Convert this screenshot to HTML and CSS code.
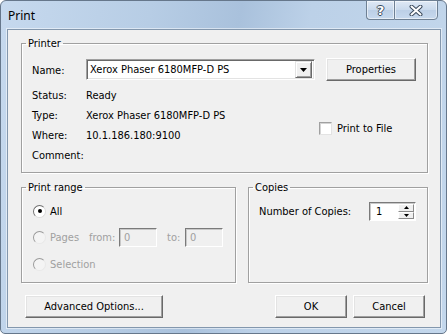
FILE: index.html
```html
<!DOCTYPE html>
<html lang="en">
<head>
  <meta charset="UTF-8">
  <title>Print</title>
  <link rel="stylesheet" href="styles.css">
</head>
<body>
  <div class="window">
    <div class="titlebar">
      <span class="title">Print</span>
      <div class="caption-buttons">
        <button class="cap help">?</button>
        <button class="cap close">
          <svg width="14" height="11" viewBox="0 0 14 11">
            <path d="M2.5 1.5 L11.5 9.5 M11.5 1.5 L2.5 9.5" stroke="#3b4a5c" stroke-width="4" stroke-linecap="round"/>
            <path d="M2.5 1.5 L11.5 9.5 M11.5 1.5 L2.5 9.5" stroke="#fff" stroke-width="2" stroke-linecap="round"/>
          </svg>
        </button>
      </div>
    </div>

    <div class="client">
      <fieldset class="group printer">
        <legend>Printer</legend>
        <div class="printer-grid">
          <span class="lbl name-lbl">Name:</span>
          <div class="combo">
            <span class="combo-text">Xerox Phaser 6180MFP-D PS</span>
            <span class="combo-btn">
              <svg width="7" height="4" viewBox="0 0 7 4"><path d="M0 0 H7 L3.5 4 Z" fill="#000"/></svg>
            </span>
          </div>
          <button class="btn props">Properties</button>

          <span class="lbl">Status:</span>
          <span class="val">Ready</span>
          <span class="lbl">Type:</span>
          <span class="val">Xerox Phaser 6180MFP-D PS</span>
          <span class="lbl">Where:</span>
          <span class="val">10.1.186.180:9100</span>
          <span class="lbl">Comment:</span>
          <span class="val"></span>

          <label class="check"><span class="box"></span>Print to File</label>
        </div>
      </fieldset>

      <div class="lower">
        <fieldset class="group range">
          <legend>Print range</legend>
          <div class="range-body">
            <div class="radio-row row-a">
              <span class="radio on"><span class="dot"></span></span>
              <span class="radio-text">All</span>
            </div>
            <div class="radio-row row-b disabled">
              <span class="radio"></span>
              <span class="radio-text pages">Pages</span>
              <span class="from">from:</span>
              <span class="field">0</span>
              <span class="to">to:</span>
              <span class="field">0</span>
            </div>
            <div class="radio-row row-c disabled">
              <span class="radio"></span>
              <span class="radio-text">Selection</span>
            </div>
          </div>
        </fieldset>

        <fieldset class="group copies">
          <legend>Copies</legend>
          <div class="copies-body">
            <span>Number of Copies:</span>
            <div class="spin">
              <span class="spin-text">1</span>
              <span class="spin-btns">
                <span class="spin-btn"><svg width="5" height="3" viewBox="0 0 5 3"><path d="M0 3 H5 L2.5 0 Z" fill="#000"/></svg></span>
                <span class="spin-btn"><svg width="5" height="3" viewBox="0 0 5 3"><path d="M0 0 H5 L2.5 3 Z" fill="#000"/></svg></span>
              </span>
            </div>
          </div>
        </fieldset>
      </div>

      <div class="actions">
        <button class="btn adv">Advanced Options...</button>
        <button class="btn ok">OK</button>
        <button class="btn cancel">Cancel</button>
      </div>
    </div>
  </div>
</body>
</html>
```

FILE: styles.css
```css
* {
  box-sizing: border-box;
}

body {
  margin: 0;
  font-family: "DejaVu Sans Condensed", "DejaVu Sans", sans-serif;
  font-size: 11px;
  color: #000;
  background: #fff;
}

.window {
  width: 447px;
  height: 334px;
  display: flex;
  flex-direction: column;
  border: 1px solid #66778b;
  border-radius: 6px 6px 5px 5px;
  background: linear-gradient(100deg, #c6d9ee 0%, #b7cde5 30%, #a9c1dc 48%, #bcd1e8 62%, #c3d7ec 100%);
}

.titlebar {
  height: 28px;
  display: flex;
  align-items: flex-start;
  padding-left: 7px;
}

.title {
  font-family: "Noto Sans", sans-serif;
  font-size: 12px;
  line-height: 15px;
  padding-top: 7px;
}

.caption-buttons {
  display: flex;
  margin-left: auto;
  margin-right: 8px;
  margin-top: -1px;
}

.cap {
  height: 20px;
  padding: 0;
  border: 1px solid #6e8094;
  background: linear-gradient(#dfe9f5, #c9d9ec 50%, #bccfe6 51%, #c7d9ee);
  box-shadow: inset 0 0 0 1px rgba(255, 255, 255, 0.55);
  display: flex;
  align-items: center;
  justify-content: center;
}

.help {
  width: 28px;
  border-radius: 0 0 0 4px;
  border-right: none;
  font-family: "DejaVu Sans", sans-serif;
  font-weight: bold;
  font-size: 13px;
  color: #fff;
  text-shadow: 1px 0 #3b4a5c, -1px 0 #3b4a5c, 0 1px #3b4a5c, 0 -1px #3b4a5c;
}

.close {
  width: 44px;
  border-radius: 0 0 4px 0;
}

.client {
  flex: 1;
  margin: 0 5px 5px 6px;
  border: 1px solid #8397ad;
  box-shadow: 0 0 0 1px rgba(255, 255, 255, 0.5);
  background: #f0f0f0;
  padding: 7px 12px 0 13px;
}

/* group boxes */
.group {
  margin: 0;
  padding: 0;
  min-width: 0;
  border: 1px solid #a0a0a0;
  box-shadow: inset 1px 1px #fff, 1px 1px #fff;
}

.group legend {
  margin-left: 4px;
  padding: 0 2px;
  line-height: 13px;
}

.printer-grid {
  display: grid;
  grid-template-columns: 54px 233px 97px;
  grid-template-rows: 27px 20px 20px 20px 20px;
  padding: 8px 0 7px 10px;
}

.lbl {
  grid-column: 1;
  align-self: center;
}

.val {
  grid-column: 2;
  align-self: center;
}

.name-lbl {
  align-self: start;
  line-height: 25px;
}

.combo {
  align-self: start;
  margin-top: 1px;
  width: 229px;
  height: 21px;
  display: flex;
  align-items: center;
  background: #fff;
  border: 1px solid;
  border-color: #a0a0a0 #fff #fff #a0a0a0;
  box-shadow: inset 1px 1px #696969, inset -1px -1px #e3e3e3;
  padding: 0 2px 0 3px;
}

.combo-text {
  flex: 1;
}

.combo-btn {
  width: 17px;
  height: 17px;
  display: flex;
  align-items: center;
  justify-content: center;
  background: #f0f0f0;
  border: 1px solid;
  border-color: #e3e3e3 #696969 #696969 #e3e3e3;
  box-shadow: inset 1px 1px #fff, inset -1px -1px #a0a0a0;
}

.btn {
  font: inherit;
  color: #000;
  height: 23px;
  padding: 0;
  background: #f0f0f0;
  border: 1px solid;
  border-color: #fff #696969 #696969 #fff;
  box-shadow: inset -1px -1px #a0a0a0, inset 1px 1px #e3e3e3;
}

.props {
  grid-column: 3;
  grid-row: 1;
  width: 90px;
  justify-self: end;
  align-self: start;
}

.check {
  grid-column: 3;
  grid-row: 3 / span 2;
  align-self: center;
  margin-top: 6px;
  display: flex;
  align-items: center;
  gap: 5px;
}

.box {
  width: 13px;
  height: 13px;
  background: #fff;
  border: 1px solid;
  border-color: #a0a0a0 #e3e3e3 #e3e3e3 #a0a0a0;
  box-shadow: inset 1px 1px #d4d4d4;
}

/* lower groups */
.lower {
  display: grid;
  grid-template-columns: 215px 180px;
  column-gap: 12px;
  margin-top: 8px;
}

.range-body {
  display: grid;
  grid-template-rows: 26px 27px 26px;
  padding: 4px 0 5px 11px;
}

.radio-row {
  display: flex;
  align-items: center;
}

.radio {
  width: 13px;
  height: 13px;
  border-radius: 50%;
  border: 1px solid;
  border-color: #9a9a9a #e8e8e8 #e8e8e8 #9a9a9a;
  background: #f4f4f4;
  margin-right: 4px;
  display: flex;
  align-items: center;
  justify-content: center;
}

.radio.on {
  background: #fff;
  border-color: #707070 #dcdcdc #dcdcdc #707070;
}

.dot {
  width: 4px;
  height: 4px;
  border-radius: 50%;
  background: #000;
}

.disabled {
  color: #a0a0a0;
}

.pages {
  width: 39px;
}

.from {
  width: 30px;
}

.field {
  width: 38px;
  height: 19px;
  line-height: 17px;
  padding-left: 4px;
  border: 1px solid;
  border-color: #7a7a7a #fff #fff #7a7a7a;
  box-shadow: inset 1px 1px #c8c8c8;
  background: #f0f0f0;
}

.to {
  margin-left: 10px;
  width: 18px;
}

.copies-body {
  display: flex;
  align-items: center;
  justify-content: space-between;
  padding: 8px 11px 0 10px;
}

.spin {
  width: 47px;
  height: 19px;
  display: flex;
  align-items: center;
  background: #fff;
  border: 1px solid;
  border-color: #7a7a7a #fff #fff #7a7a7a;
  box-shadow: inset 1px 1px #c8c8c8;
  padding: 1px 1px 1px 6px;
}

.spin-text {
  flex: 1;
}

.spin-btns {
  display: flex;
  flex-direction: column;
  width: 16px;
  height: 100%;
}

.spin-btn {
  flex: 1;
  display: flex;
  align-items: center;
  justify-content: center;
  background: #f0f0f0;
  border: 1px solid;
  border-color: #fff #8a8a8a #8a8a8a #fff;
}

/* dialog buttons */
.actions {
  display: flex;
  gap: 6px;
  margin: 12px 3px 0 4px;
}

.adv {
  width: 138px;
  margin-right: auto;
}

.ok,
.cancel {
  width: 72px;
}
```
